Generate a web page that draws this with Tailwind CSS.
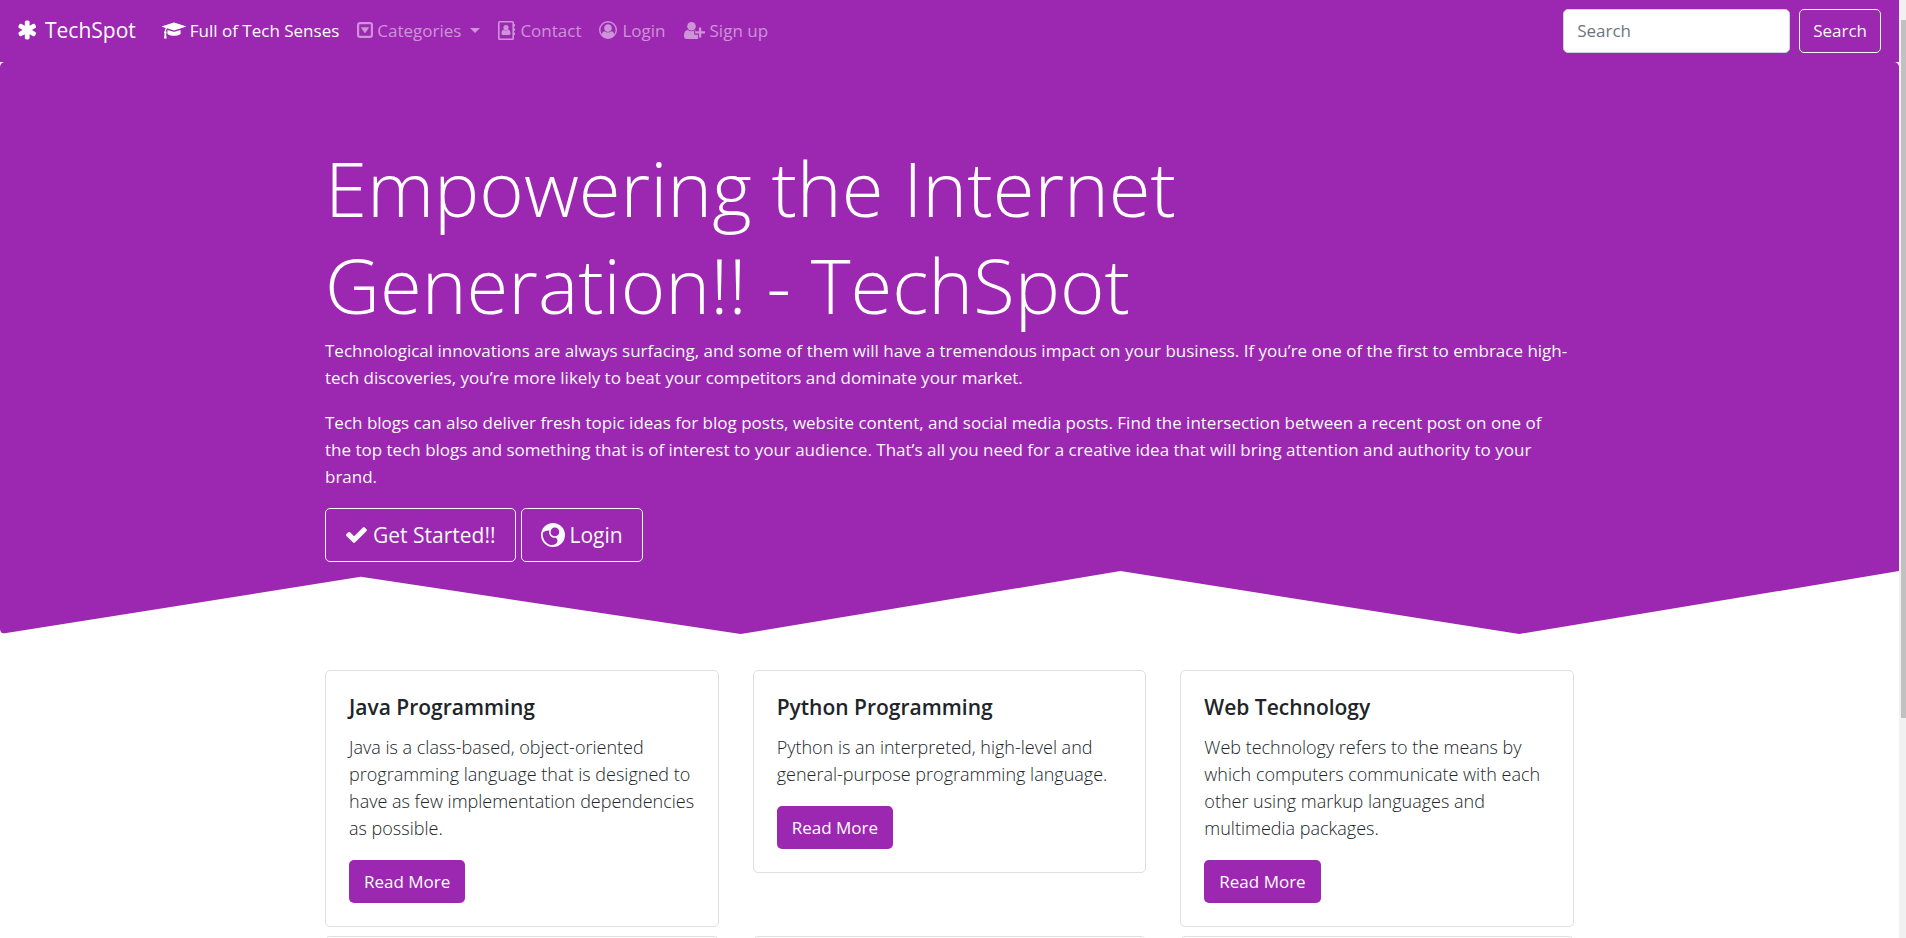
<!DOCTYPE html>
<html lang="en">
<head>
<meta charset="utf-8">
<meta name="viewport" content="width=device-width, initial-scale=1">
<title>TechSpot</title>
<script src="https://cdn.jsdelivr.net/npm/@tailwindcss/browser@4"></script>
</head>
<body class="h-screen overflow-hidden bg-white font-['Open_Sans','Noto_Sans',sans-serif] text-[17px] leading-[27px] text-[#212529]">
<svg class="hidden" aria-hidden="true">
  <symbol id="asterisk" viewBox="190 90 1412 1612"><path d="M1482 1050q46 26 59.500 77.500t-12.500 97.500l-64 110q-26 46-77.500 59.500t-97.500-12.500l-266-153v307q0 52-38 90t-90 38h-128q-52 0-90-38t-38-90v-307l-266 153q-46 26-97.500 12.500t-77.500-59.500l-64-110q-26-46-12.500-97.500t59.500-77.500l266-154-266-154q-46-26-59.500-77.500t12.500-97.500l64-110q26-46 77.500-59.500t97.500 12.500l266 153v-307q0-52 38-90t90-38h128q52 0 90 38t38 90v307l266-153q46-26 97.500-12.500t77.500 59.500l64 110q26 46 12.500 97.500t-59.500 77.500l-266 154z"/></symbol>
  <symbol id="graduation" viewBox="0 0 2304 1792"><path d="M1774 836l18 316q4 69-82 128t-235 93.500-323 34.500-323-34.500-235-93.500-82-128l18-316 574 181q22 7 48 7t48-7zm530-324q0 23-22 31l-1120 352q-4 1-10 1t-10-1l-652-206q-43 34-71 111.500t-34 178.500q63 36 63 109 0 69-58 107l58 433q2 14-8 25-9 11-24 11h-192q-15 0-24-11-10-11-8-25l58-433q-58-38-58-107 0-73 65-111 11-207 98-330l-333-104q-22-8-22-31t22-31l1120-352q4-1 10-1t10 1l1120 352q22 8 22 31z"/></symbol>
  <symbol id="check" viewBox="121 334 1550 1188"><path d="M1671 566q0 40-28 68l-724 724-136 136q-28 28-68 28t-68-28l-136-136-362-362q-28-28-28-68t28-68l136-136q28-28 68-28t68 28l294 295 656-657q28-28 68-28t68 28l136 136q28 28 28 68z"/></symbol>
  <symbol id="caret-square" viewBox="0 0 16 16"><path fill-rule="evenodd" d="M3 0h10a3 3 0 0 1 3 3v10a3 3 0 0 1-3 3H3a3 3 0 0 1-3-3V3a3 3 0 0 1 3-3zm-.4 2.200a.4.4 0 0 0-.4.4v10.800c0 .2.200.4.4.4h10.800c.2 0 .4-.2.4-.4V2.600a.4.4 0 0 0-.4-.4zM4.600 5.200h6.800c.5 0 .7.500.4.9l-3.300 4.700c-.2.300-.8.300-1 0L4.200 6.100c-.3-.4-.1-.9.400-.9z"/></symbol>
  <symbol id="address-book" viewBox="0 0 17 19"><path fill-rule="evenodd" d="M1.600 0h12.800A1.600 1.600 0 0 1 16 1.600V3h.5a.5.5 0 0 1 .5.500v1.600a.5.500 0 0 1-.5.500H16v1.600h.5a.5.5 0 0 1 .5.500v1.600a.5.5 0 0 1-.5.500H16v1.600h.5a.5.5 0 0 1 .5.500v1.600a.5.5 0 0 1-.5.500H16v3.400a1.600 1.600 0 0 1-1.600 1.600H1.600A1.600 1.600 0 0 1 0 17.400V1.600A1.600 1.600 0 0 1 1.600 0zm0 1.500v16h12.800v-16z"/><circle cx="8" cy="6.700" r="2.600"/><path d="M5.700 8.700a3.800 3.800 0 0 0 4.600 0c1.500.1 2.200 1.500 2.200 3.800 0 1-.7 1.600-1.600 1.600H5.100c-.9 0-1.600-.6-1.600-1.600 0-2.300.7-3.700 2.200-3.800z"/></symbol>
  <symbol id="user-circle" viewBox="0 0 1792 1792"><path fill-rule="evenodd" d="M896 0a896 896 0 1 1 0 1792A896 896 0 0 1 896 0zm619 1351q129-205 129-455 0-146-59-288t-159-238-238-159-292-59-292 59-238 159-159 238-59 288q0 250 129 455 66-327 306-327 131 128 313 128t313-128q240 0 306 327zm-235-647q0-159-112.500-271.500t-271.500-112.500-271.500 112.500-112.500 271.500 112.500 271.500 271.500 112.500 271.500-112.500 112.500-271.500z"/></symbol>
  <symbol id="user-plus" viewBox="0 0 21 17"><circle cx="7.500" cy="4.300" r="4.300"/><path d="M4 8.100c.9.800 2.100 1.200 3.500 1.200s2.600-.4 3.500-1.200c.4 0 .8.100 1.200.3h-1.200c-.5 0-.9.400-.9.900v2.500c0 .5.400.9.900.9h2.900v2.900c0 .4.200.7.500.8-.5.400-1.200.6-2 .6H2.700C1 17 0 16 0 14.300c0-2.900.8-6.100 4-6.200z"/><path d="M14.900 5.600h2.300v3.700H21v2.300h-3.800v3.800h-2.300v-3.800h-3.800V9.300h3.800z"/></symbol>
  <symbol id="swirl" viewBox="0 0 24 24"><path fill-rule="evenodd" d="M12 0a12 12 0 1 1 0 24A12 12 0 0 1 12 0zM13.900 4.600a4.300 4.300 0 1 0 0 8.600 4.300 4.300 0 0 0 0-8.600zM8.300 7.400C6 7.300 3.400 8 1.800 9.700c-.5 5 2 10.200 7 12.100 3.800.8 7-.7 7.600-3.300.3-1.600-.5-2.900-1.600-3.700-3.800.6-7.700-2.700-6.500-7.400z"/></symbol>
</svg>
<div class="flex h-full">
<div class="min-w-0 flex-1">
  <nav class="flex items-center justify-between bg-[#9c27b0] px-[18px] py-[9px] text-white">
    <div class="flex items-center pb-[2px]">
      <a href="#" class="mr-[26px] flex items-center gap-[7px] text-[21px]"><svg class="h-5 w-5 fill-current"><use href="#asterisk"/></svg>TechSpot</a>
      <ul class="flex items-center gap-[18px] text-white/50">
        <li><a href="#" class="flex items-center gap-1 text-white"><svg class="h-[19px] w-6 fill-current"><use href="#graduation"/></svg>Full of Tech Senses</a></li>
        <li><a href="#" class="flex items-center gap-1"><svg class="size-4 fill-current"><use href="#caret-square"/></svg>Categories<span class="ml-[5px] border-x-[5px] border-t-[5px] border-x-transparent"></span></a></li>
        <li><a href="#" class="flex items-center gap-[5px]"><svg class="h-[19px] w-[17px] fill-current"><use href="#address-book"/></svg>Contact</a></li>
        <li><a href="#" class="flex items-center gap-[5px]"><svg class="size-[18px] fill-current"><use href="#user-circle"/></svg>Login</a></li>
        <li><a href="#" class="flex items-center gap-[5px]"><svg class="h-[17px] w-[21px] fill-current"><use href="#user-plus"/></svg>Sign up</a></li>
      </ul>
    </div>
    <form class="flex gap-[9px]">
      <input type="search" placeholder="Search" aria-label="Search" class="h-11 w-[227px] rounded-[5px] border border-[#ced4da] bg-white px-[13px] pb-[2px] text-[#495057] placeholder:text-[#6c757d]">
      <button type="button" class="h-11 rounded-[5px] border border-[#f8f9fa] px-[13px] pb-[2px] text-[#f8f9fa]">Search</button>
    </form>
  </nav>
  <header class="rounded-[5px] bg-[#9c27b0] px-9 pt-[77px] pb-[72px] text-[#f8f9fa] [clip-path:polygon(0_0,100%_0,100%_89%,80%_100%,59%_89%,39%_100%,19%_90%,0_100%)]">
    <div class="mx-auto max-w-[1249px]">
      <h1 class="mb-[4px] max-w-[940px] text-[76px] font-light leading-[97px] text-white">Empowering the Internet Generation!! - TechSpot</h1>
      <p class="mb-[18px]">Technological innovations are always surfacing, and some of them will have a tremendous impact on your business. If you’re one of the first to embrace high-tech discoveries, you’re more likely to beat your competitors and dominate your market.</p>
      <p class="mb-[18px] pr-2">Tech blogs can also deliver fresh topic ideas for blog posts, website content, and social media posts. Find the intersection between a recent post on one of the top tech blogs and something that is of interest to your audience. That’s all you need for a creative idea that will bring attention and authority to your brand.</p>
      <div class="flex gap-[5px] text-[21px]">
        <button type="button" class="flex h-[54px] items-center gap-[6px] rounded-[5px] border border-[#f8f9fa] px-5"><svg class="h-4 w-[21px] fill-current"><use href="#check"/></svg>Get Started!!</button>
        <button type="button" class="flex h-[54px] items-center gap-1 rounded-[5px] border border-[#f8f9fa] px-[19px]"><svg class="size-6 fill-current"><use href="#swirl"/></svg>Login</button>
      </div>
    </div>
  </header>
  <main class="mx-auto mt-9 grid max-w-[1249px] grid-cols-3 items-start gap-x-[34px] gap-y-[9px]">
    <article class="rounded-[5px] border border-[#dfdfdf] p-[23px]">
      <h2 class="mb-[13px] text-[21px] font-semibold">Java Programming</h2>
      <p class="mb-[18px] text-[18px] leading-[27px] font-light">Java is a class-based, object-oriented programming language that is designed to have as few implementation dependencies as possible.</p>
      <a href="#" class="inline-block rounded-[5px] bg-[#9c27b0] px-[15px] py-2 align-top text-white">Read More</a>
    </article>
    <article class="rounded-[5px] border border-[#dfdfdf] p-[23px]">
      <h2 class="mb-[13px] text-[21px] font-semibold">Python Programming</h2>
      <p class="mb-[18px] text-[18px] leading-[27px] font-light">Python is an interpreted, high-level and general-purpose programming language.</p>
      <a href="#" class="inline-block rounded-[5px] bg-[#9c27b0] px-[15px] py-2 align-top text-white">Read More</a>
    </article>
    <article class="rounded-[5px] border border-[#dfdfdf] p-[23px]">
      <h2 class="mb-[13px] text-[21px] font-semibold">Web Technology</h2>
      <p class="mb-[18px] text-[18px] leading-[27px] font-light">Web technology refers to the means by which computers communicate with each other using markup languages and multimedia packages.</p>
      <a href="#" class="inline-block rounded-[5px] bg-[#9c27b0] px-[15px] py-2 align-top text-white">Read More</a>
    </article>
    <article class="h-64 rounded-[5px] border border-[#dfdfdf]"></article>
    <article class="h-64 rounded-[5px] border border-[#dfdfdf]"></article>
    <article class="h-64 rounded-[5px] border border-[#dfdfdf]"></article>
  </main>
</div>
<div class="w-[7px] shrink-0 bg-[#f1f1f1] pl-[2px] pt-5" aria-hidden="true"><div class="h-[76%] bg-[#c1c1c1]"></div></div>
</div>
</body>
</html>
